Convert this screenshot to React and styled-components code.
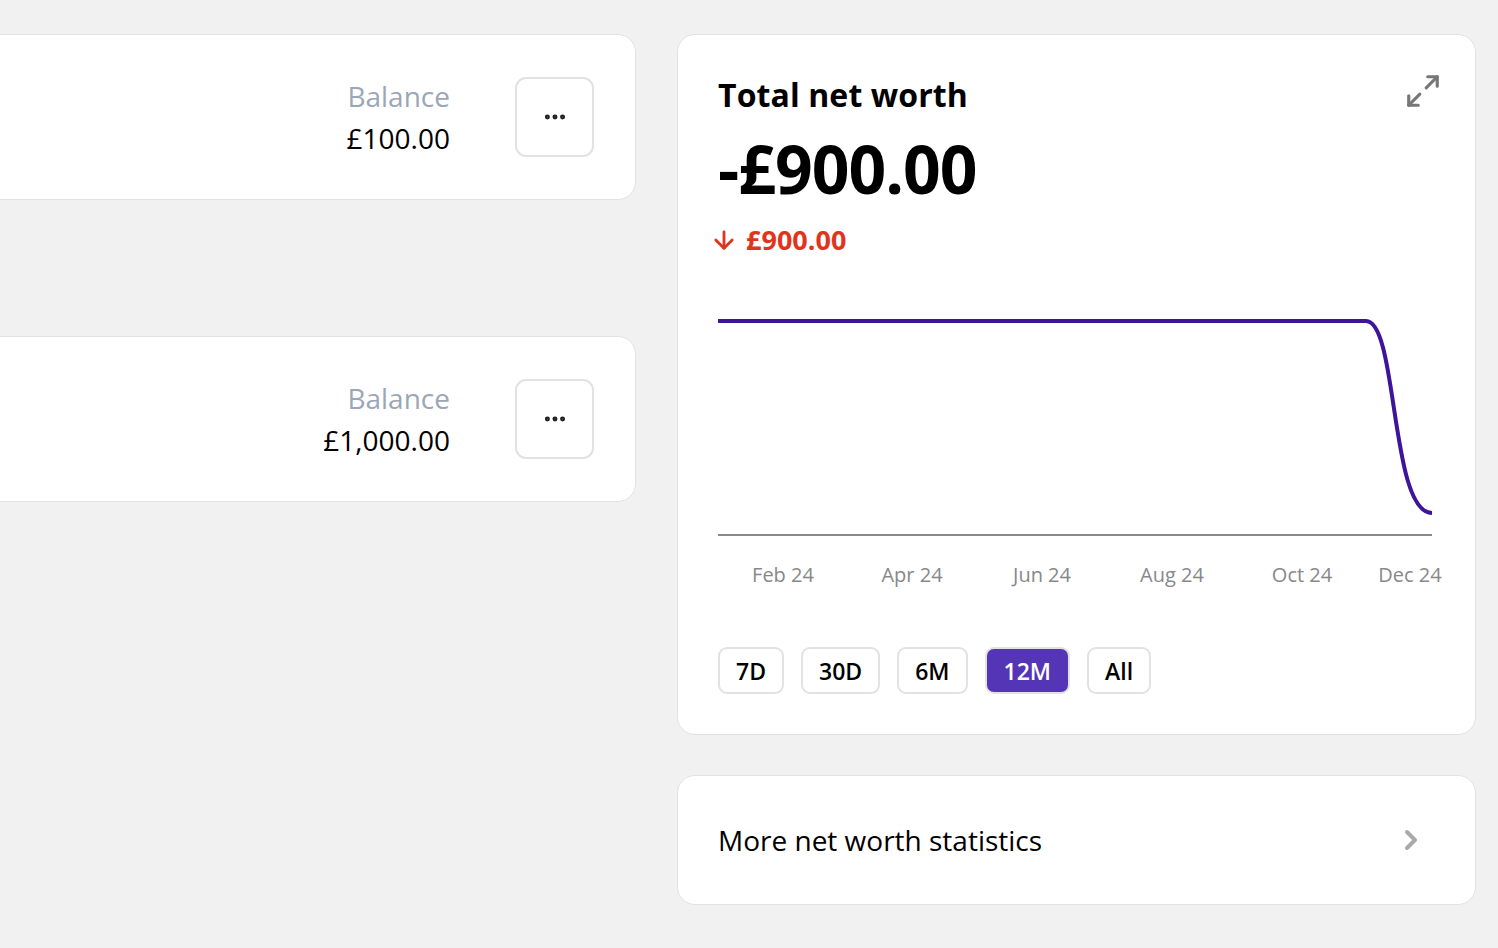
import styled, { createGlobalStyle } from "styled-components";
import { Ellipsis, Maximize2, ChevronRight, ArrowDown } from "lucide-react";

const Global = createGlobalStyle`
  html, body {
    margin: 0;
    padding: 0;
    background: #f1f1f1;
    overflow: hidden;
  }
  body {
    font-family: "Open Sans", "Liberation Sans", sans-serif;
    color: #000;
  }
`;

const Page = styled.div`
  display: grid;
  grid-template-columns: 1fr 799px;
  column-gap: 41px;
  margin-left: -42px;
  padding: 34px 22px 0 0;
  height: 948px;
  box-sizing: border-box;
`;

const Column = styled.div`
  display: flex;
  flex-direction: column;
  gap: ${(p) => p.gap}px;
`;

const Card = styled.div`
  background: #fff;
  border: 1px solid #e2e2e2;
  border-radius: 18px;
  box-sizing: border-box;
`;

const AccountCard = styled(Card)`
  height: 166px;
  display: flex;
  align-items: center;
  justify-content: flex-end;
  gap: 65px;
  padding: 0 41px 0 0;
`;

const Balance = styled.div`
  text-align: right;
  font-size: 28px;
  line-height: 42px;
`;

const BalanceLabel = styled.div`
  color: #9ba6b7;
`;

const MenuButton = styled.button`
  width: 79px;
  height: 80px;
  border: 2px solid #e2e2e2;
  border-radius: 11px;
  background: #fff;
  display: flex;
  align-items: center;
  justify-content: center;
  color: #222;
  padding: 0;
`;

const WorthCard = styled(Card)`
  padding: 38px 40px 40px 40px;
  display: flex;
  flex-direction: column;
`;

const TitleRow = styled.div`
  display: flex;
  justify-content: space-between;
  align-items: flex-start;
`;

const Title = styled.h2`
  margin: 0;
  font-size: 32px;
  font-weight: 700;
  line-height: 44px;
  letter-spacing: 0.1px;
`;

const ExpandIcon = styled(Maximize2)`
  margin: -1px -7px 0 0;
`;

const Amount = styled.div`
  font-size: 66px;
  font-weight: 700;
  line-height: 84px;
  letter-spacing: -1px;
  margin-top: 9px;
`;

const Change = styled.div`
  display: flex;
  align-items: center;
  gap: 8px;
  color: #e0341c;
  font-size: 27px;
  font-weight: 700;
  line-height: 40px;
  margin: 10px 0 0 -8px;
`;

const Chart = styled.svg`
  display: block;
  margin-top: 40px;
  overflow: visible;
  font-family: "Open Sans", "Liberation Sans", sans-serif;
`;

const Ranges = styled.div`
  display: flex;
  gap: 17px;
  margin-top: 47px;
`;

const RangeButton = styled.button`
  height: 47px;
  padding: 0 ${(p) => p.pad}px;
  border-radius: 9px;
  border: 2px solid #e2e2e2;
  background: ${(p) => (p.active ? "#5335b6" : "#fff")};
  color: ${(p) => (p.active ? "#fff" : "#000")};
  font-family: inherit;
  font-size: 23px;
  font-weight: 600;
`;

const StatsCard = styled(Card)`
  height: 130px;
  display: flex;
  align-items: center;
  justify-content: space-between;
  padding: 0 48px 0 40px;
  font-size: 28px;
`;

const ticks = [
  { label: "Feb 24", x: 65 },
  { label: "Apr 24", x: 194 },
  { label: "Jun 24", x: 324 },
  { label: "Aug 24", x: 454 },
  { label: "Oct 24", x: 584 },
  { label: "Dec 24", x: 692 },
];

const ranges = [
  { label: "7D", pad: 16 },
  { label: "30D", pad: 16 },
  { label: "6M", pad: 16 },
  { label: "12M", pad: 17, active: true },
  { label: "All", pad: 16 },
];

const App = () => {
  return (
    <>
      <Global />
      <Page>
        <Column gap={136}>
          <AccountCard>
            <Balance>
              <BalanceLabel>Balance</BalanceLabel>
              <div>£100.00</div>
            </Balance>
            <MenuButton>
              <Ellipsis size={26} strokeWidth={2.6} />
            </MenuButton>
          </AccountCard>
          <AccountCard>
            <Balance>
              <BalanceLabel>Balance</BalanceLabel>
              <div>£1,000.00</div>
            </Balance>
            <MenuButton>
              <Ellipsis size={26} strokeWidth={2.6} />
            </MenuButton>
          </AccountCard>
        </Column>

        <Column gap={40}>
          <WorthCard>
            <TitleRow>
              <Title>Total net worth</Title>
              <ExpandIcon size={38} color="#777" strokeWidth={2} />
            </TitleRow>
            <Amount>-£900.00</Amount>
            <Change>
              <ArrowDown size={28} strokeWidth={2.4} />
              £900.00
            </Change>
            <Chart width="715" height="300" viewBox="0 0 715 300">
              <path
                d="M0 21 H648 C680 21 672 213 714 213"
                fill="none"
                stroke="#3e149a"
                strokeWidth="4"
              />
              <line x1="0" y1="235" x2="714" y2="235" stroke="#8a8a8a" strokeWidth="2" />
              {ticks.map((t) => (
                <text
                  key={t.label}
                  x={t.x}
                  y="282"
                  textAnchor="middle"
                  fontSize="20"
                  fill="#888"
                >
                  {t.label}
                </text>
              ))}
            </Chart>
            <Ranges>
              {ranges.map((r) => (
                <RangeButton key={r.label} active={r.active} pad={r.pad}>
                  {r.label}
                </RangeButton>
              ))}
            </Ranges>
          </WorthCard>
          <StatsCard>
            More net worth statistics
            <ChevronRight size={32} color="#aaa" strokeWidth={3} />
          </StatsCard>
        </Column>
      </Page>
    </>
  );
};

export default App;
